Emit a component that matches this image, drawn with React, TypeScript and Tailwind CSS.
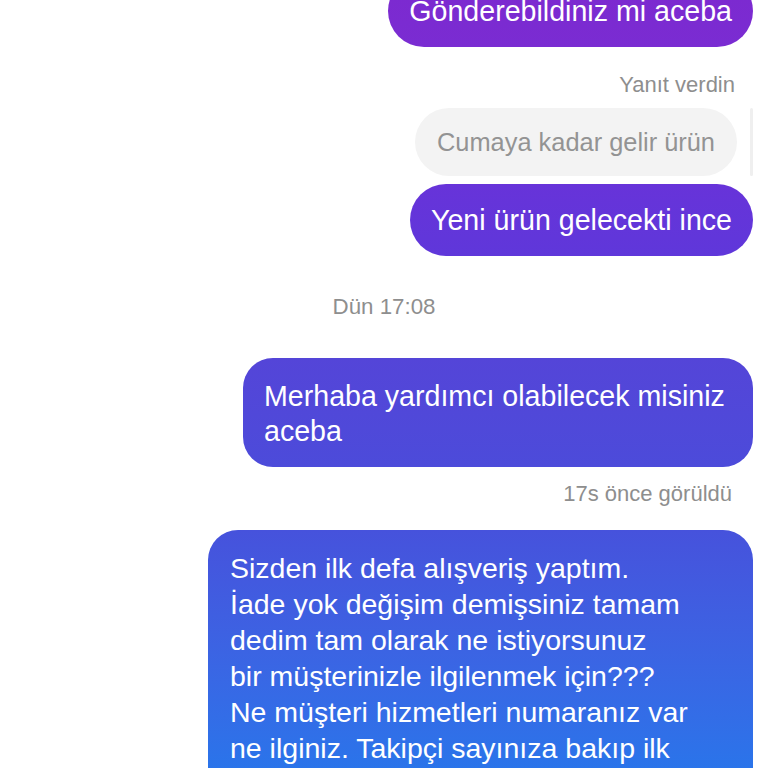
import React from "react";

const font = { fontFamily: '"Liberation Sans", Arial, sans-serif' };

export default function App() {
  return (
    <div
      className="w-[768px] h-[768px] overflow-hidden bg-white flex flex-col items-end pr-[15px]"
      style={font}
    >
      <div className="mt-[-25px] h-[72px] rounded-full bg-gradient-to-b from-[#7d29cf] to-[#7a2cd2] text-white text-[28.6px] leading-[72px] px-[21px] whitespace-nowrap">
        Gönderebildiniz mi aceba
      </div>

      <div className="mt-[26px] mr-[18px] text-[22px] leading-[24px] text-[#8e8e8e]">
        Yanıt verdin
      </div>

      <div className="mt-[11px] flex items-stretch gap-[13px]">
        <div className="h-[68px] rounded-full bg-[#f3f3f3] text-[#939393] text-[25.4px] leading-[68px] px-[22px] whitespace-nowrap">
          Cumaya kadar gelir ürün
        </div>
        <div className="w-[3px] rounded-full bg-[#efefef]" />
      </div>

      <div className="mt-[8px] h-[72px] rounded-full bg-gradient-to-b from-[#6733d9] to-[#5f37da] text-white text-[28.6px] leading-[72px] px-[21px] whitespace-nowrap">
        Yeni ürün gelecekti ince
      </div>

      <div className="mt-[39px] self-stretch text-center text-[22.3px] leading-[24px] text-[#8e8e8e] pl-[15px]">
        Dün 17:08
      </div>

      <div className="mt-[39px] w-[510px] rounded-[30px] bg-gradient-to-b from-[#5445d8] to-[#4c4bda] text-white text-[28.6px] leading-[35px] px-[21px] pt-[21px] pb-[18px]">
        Merhaba yardımcı olabilecek misiniz aceba
      </div>

      <div className="mt-[15px] mr-[21px] text-[22px] leading-[24px] text-[#8e8e8e]">
        17s önce görüldü
      </div>

      <div className="mt-[24px] w-[545px] h-[320px] rounded-t-[30px] bg-gradient-to-b from-[#4652dc] to-[#2a74ea] text-white text-[28.5px] leading-[36px] px-[22px] pt-[20px]">
        <div>Sizden ilk defa alışveriş yaptım.</div>
        <div>İade yok değişim demişsiniz tamam</div>
        <div>dedim tam olarak ne istiyorsunuz</div>
        <div>bir müşterinizle ilgilenmek için???</div>
        <div>Ne müşteri hizmetleri numaranız var</div>
        <div>ne ilginiz. Takipçi sayınıza bakıp ilk</div>
      </div>
    </div>
  );
}
